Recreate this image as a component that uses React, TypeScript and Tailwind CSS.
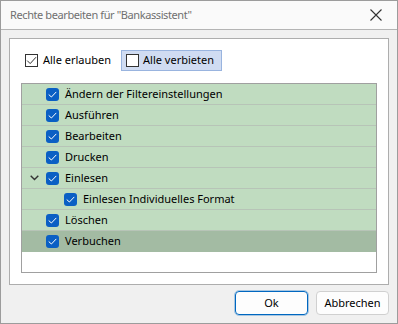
import React from 'react';

const Check = ({ className }: { className?: string }) => (
  <svg viewBox="0 0 13 13" className={className}>
    <path d="M3 6.8 L5.4 9 L10 4.2" fill="none" stroke="currentColor" strokeWidth="1" strokeLinecap="round" strokeLinejoin="round" />
  </svg>
);

const BlueBox = () => (
  <span className="flex h-[13px] w-[13px] shrink-0 items-center justify-center rounded-[3px] bg-[#0a5fc4] text-white">
    <Check className="h-[13px] w-[13px]" />
  </span>
);

type Row = { label: string; level: number; expander?: boolean; selected?: boolean };

const rows: Row[] = [
  { label: 'Ändern der Filtereinstellungen', level: 0 },
  { label: 'Ausführen', level: 0 },
  { label: 'Bearbeiten', level: 0 },
  { label: 'Drucken', level: 0 },
  { label: 'Einlesen', level: 0, expander: true },
  { label: 'Einlesen Individuelles Format', level: 1 },
  { label: 'Löschen', level: 0 },
  { label: 'Verbuchen', level: 0, selected: true },
];

export default function App() {
  return (
    <div className="flex h-[324px] w-[398px] flex-col border border-[#9c9c9c] bg-[#f0f0f0] font-['Noto_Sans',sans-serif] text-[11px] text-black">
      {/* title bar */}
      <div className="flex h-[29px] shrink-0 items-center justify-between border-b border-[#b4b4b4] bg-[#fafafa] pl-[9px] pr-[15px]">
        <span className="tracking-[-0.4px] text-[#707070]">Rechte bearbeiten für "Bankassistent"</span>
        <svg viewBox="0 0 12 12" className="h-[12px] w-[12px] text-[#333]">
          <path d="M0.5 0.5 L11.5 11.5 M11.5 0.5 L0.5 11.5" stroke="currentColor" strokeWidth="1.1" />
        </svg>
      </div>

      <div className="flex flex-1 flex-col px-[8px] pt-[8px]">
        <div className="flex h-[247px] flex-col border border-[#adadad] bg-white p-[11px]">
          <div className="flex h-[21px] items-center gap-[10px] pl-[4px]">
            <label className="flex items-center gap-[5px]">
              <span className="flex h-[13px] w-[13px] items-center justify-center border border-[#333] text-[#333]">
                <svg viewBox="0 0 11 11" className="h-[11px] w-[11px]">
                  <path d="M1.2 5.6 L4.2 8.6 L10 2.2" fill="none" stroke="currentColor" strokeWidth="1" />
                </svg>
              </span>
              Alle erlauben
            </label>
            <label className="flex h-[21px] items-center gap-[4px] border border-[#99b4df] bg-[#d0dcf2] pl-[4px] pr-[7px]">
              <span className="h-[13px] w-[13px] border border-[#333] bg-white" />
              Alle verbieten
            </label>
          </div>

          <div className="mt-[12px] flex-1 border border-[#a0a0a0] bg-white">
            {rows.map((r, i) => (
              <div
                key={i}
                className={
                  r.selected
                    ? 'flex h-[21px] items-center bg-[#a3bba3]'
                    : 'flex h-[21px] items-center border-b border-[#b7c4b7] bg-[#c0dcc0]'
                }
              >
                <span className={r.level === 1 ? 'flex w-[42px] shrink-0 justify-end' : 'flex w-[24px] shrink-0 justify-end'}>
                  {r.expander && (
                    <svg viewBox="0 0 9 6" className="mr-[7px] h-[6px] w-[9px] text-[#333]">
                      <path d="M0.7 0.7 L4.5 4.6 L8.3 0.7" fill="none" stroke="currentColor" strokeWidth="1.4" />
                    </svg>
                  )}
                </span>
                <BlueBox />
                <span className="ml-[6px]">{r.label}</span>
              </div>
            ))}
          </div>
        </div>

        <div className="mt-[6px] flex justify-end gap-[8px]">
          <button className="h-[24px] w-[73px] rounded-[4px] border border-[#0067c0] bg-[#fdfdfd] outline outline-1 outline-[#0067c0]/30">
            Ok
          </button>
          <button className="h-[24px] w-[73px] rounded-[4px] border border-[#d0d0d0] bg-[#fdfdfd]">
            Abbrechen
          </button>
        </div>
      </div>
    </div>
  );
}
